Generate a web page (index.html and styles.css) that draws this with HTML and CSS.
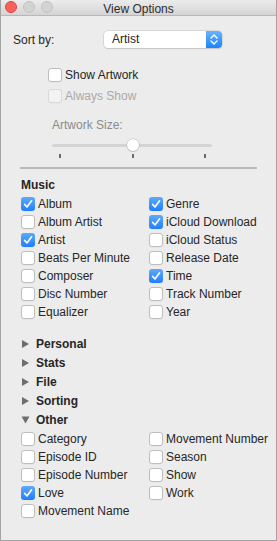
FILE: index.html
```html
<!DOCTYPE html>
<html>
<head>
<meta charset="utf-8">
<title>View Options</title>
<link rel="stylesheet" href="styles.css">
</head>
<body>
<div class="window">
  <div class="titlebar">
    <div class="lights">
      <span class="light red"></span>
      <span class="light off"></span>
      <span class="light off"></span>
    </div>
    <div class="title">View Options</div>
  </div>

  <div class="content">
    <div class="sort-row">
      <span class="sort-label">Sort by:</span>
      <div class="popup">
        <span class="popup-value">Artist</span>
        <span class="stepper">
          <svg width="16" height="17" viewBox="0 0 16 17"><path d="M5 7 L8 4 L11 7 M5 10 L8 13 L11 10" fill="none" stroke="#fff" stroke-width="1.4" stroke-linecap="round" stroke-linejoin="round"/></svg>
        </span>
      </div>
    </div>

    <div class="artwork">
      <label class="check-row"><span class="box"></span><span>Show Artwork</span></label>
      <label class="check-row disabled"><span class="box"></span><span>Always Show</span></label>
      <div class="size-label">Artwork Size:</div>
      <div class="slider">
        <div class="track"></div>
        <div class="knob"></div>
      </div>
      <div class="ticks"><span></span><span></span><span></span></div>
    </div>

    <div class="sep"></div>

    <div class="group">
      <div class="heading">Music</div>
      <div class="grid">
        <label class="item"><span class="box on"><svg width="14" height="14" viewBox="0 0 14 14"><path d="M3.6 7.4 L6 9.9 L10.6 3.8" fill="none" stroke="#fff" stroke-width="1.6" stroke-linecap="round" stroke-linejoin="round"/></svg></span><span>Album</span></label>
        <label class="item"><span class="box on"><svg width="14" height="14" viewBox="0 0 14 14"><path d="M3.6 7.4 L6 9.9 L10.6 3.8" fill="none" stroke="#fff" stroke-width="1.6" stroke-linecap="round" stroke-linejoin="round"/></svg></span><span>Genre</span></label>
        <label class="item"><span class="box"></span><span>Album Artist</span></label>
        <label class="item"><span class="box on"><svg width="14" height="14" viewBox="0 0 14 14"><path d="M3.6 7.4 L6 9.9 L10.6 3.8" fill="none" stroke="#fff" stroke-width="1.6" stroke-linecap="round" stroke-linejoin="round"/></svg></span><span>iCloud Download</span></label>
        <label class="item"><span class="box on"><svg width="14" height="14" viewBox="0 0 14 14"><path d="M3.6 7.4 L6 9.9 L10.6 3.8" fill="none" stroke="#fff" stroke-width="1.6" stroke-linecap="round" stroke-linejoin="round"/></svg></span><span>Artist</span></label>
        <label class="item"><span class="box"></span><span>iCloud Status</span></label>
        <label class="item"><span class="box"></span><span>Beats Per Minute</span></label>
        <label class="item"><span class="box"></span><span>Release Date</span></label>
        <label class="item"><span class="box"></span><span>Composer</span></label>
        <label class="item"><span class="box on"><svg width="14" height="14" viewBox="0 0 14 14"><path d="M3.6 7.4 L6 9.9 L10.6 3.8" fill="none" stroke="#fff" stroke-width="1.6" stroke-linecap="round" stroke-linejoin="round"/></svg></span><span>Time</span></label>
        <label class="item"><span class="box"></span><span>Disc Number</span></label>
        <label class="item"><span class="box"></span><span>Track Number</span></label>
        <label class="item"><span class="box"></span><span>Equalizer</span></label>
        <label class="item"><span class="box"></span><span>Year</span></label>
      </div>
    </div>

    <ul class="disclosures">
      <li class="disc"><svg class="tri" width="9" height="10" viewBox="0 0 9 10"><path d="M1 1 L8 5 L1 9 Z" fill="#6e6e6e"/></svg><span>Personal</span></li>
      <li class="disc"><svg class="tri" width="9" height="10" viewBox="0 0 9 10"><path d="M1 1 L8 5 L1 9 Z" fill="#6e6e6e"/></svg><span>Stats</span></li>
      <li class="disc"><svg class="tri" width="9" height="10" viewBox="0 0 9 10"><path d="M1 1 L8 5 L1 9 Z" fill="#6e6e6e"/></svg><span>File</span></li>
      <li class="disc"><svg class="tri" width="9" height="10" viewBox="0 0 9 10"><path d="M1 1 L8 5 L1 9 Z" fill="#6e6e6e"/></svg><span>Sorting</span></li>
      <li class="disc"><svg class="tri" width="9" height="10" viewBox="0 0 9 10"><path d="M0.5 1.5 L8.5 1.5 L4.5 8.5 Z" fill="#6e6e6e"/></svg><span>Other</span></li>
    </ul>

    <div class="grid other">
      <label class="item"><span class="box"></span><span>Category</span></label>
      <label class="item"><span class="box"></span><span>Movement Number</span></label>
      <label class="item"><span class="box"></span><span>Episode ID</span></label>
      <label class="item"><span class="box"></span><span>Season</span></label>
      <label class="item"><span class="box"></span><span>Episode Number</span></label>
      <label class="item"><span class="box"></span><span>Show</span></label>
      <label class="item"><span class="box on"><svg width="14" height="14" viewBox="0 0 14 14"><path d="M3.6 7.4 L6 9.9 L10.6 3.8" fill="none" stroke="#fff" stroke-width="1.6" stroke-linecap="round" stroke-linejoin="round"/></svg></span><span>Love</span></label>
      <label class="item"><span class="box"></span><span>Work</span></label>
      <label class="item"><span class="box"></span><span>Movement Name</span></label>
    </div>
  </div>
</div>
</body>
</html>
```

FILE: styles.css
```css
* { box-sizing: border-box; }

html, body {
  margin: 0;
  padding: 0;
  background: #ececec;
}

body {
  font-family: "Liberation Sans", Arial, sans-serif;
  font-size: 12px;
  color: #262626;
}

.window {
  width: 277px;
  height: 541px;
  background: #ececec;
  border: 1px solid #a3a3a3;
  border-top: none;
  overflow: hidden;
}

.titlebar {
  position: relative;
  height: 16px;
  background: linear-gradient(#ebebeb, #d5d5d5);
  border-bottom: 1px solid #b7b7b7;
}

.title {
  text-align: center;
  line-height: 18px;
  font-size: 12px;
  color: #2b2b2b;
}

.lights {
  position: absolute;
  left: 4px;
  top: 1px;
  display: flex;
  gap: 6px;
}

.light {
  width: 12px;
  height: 12px;
  border-radius: 50%;
}

.light.red {
  background: #fc605b;
  border: 1px solid #e0443e;
}

.light.off {
  background: #d3d3d3;
  border: 1px solid #c2c2c2;
}

.content {
  padding-left: 20px;
}

.sort-row {
  display: flex;
  align-items: center;
  margin-top: 15px;
  margin-left: -8px;
  height: 17px;
}

.sort-label {
  width: 91px;
}

.popup {
  display: flex;
  width: 118px;
  height: 17px;
  background: #fff;
  border-radius: 4px;
  box-shadow: 0 0 0 0.5px #c3c3c3, 0 1px 1px rgba(0,0,0,0.15);
  overflow: hidden;
}

.popup-value {
  flex: 1;
  padding-left: 8px;
  line-height: 17px;
}

.stepper {
  width: 16px;
  height: 17px;
  background: linear-gradient(#6cb3fa, #1a84fb);
  display: flex;
}

.artwork {
  padding-left: 27px;
  margin-top: 20px;
}

.check-row {
  display: flex;
  align-items: center;
  gap: 3px;
  height: 14px;
  margin-bottom: 7px;
}

.check-row.disabled {
  color: #a9a9a9;
}

.check-row.disabled .box {
  background: #f3f3f3;
  border-color: #d9d9d9;
}

.box {
  width: 14px;
  height: 14px;
  flex: none;
  background: #fff;
  border: 1px solid #bdbdbd;
  border-radius: 3px;
  display: flex;
  box-shadow: 0 0.5px 0 rgba(0,0,0,0.05);
}

.box.on {
  border: none;
  background: linear-gradient(#5fa9fb, #217ff8);
}

.size-label {
  margin-top: 15px;
  margin-left: 4px;
  height: 14px;
  line-height: 14px;
  color: #8b8b8b;
}

.slider {
  position: relative;
  margin-top: 7px;
  margin-left: 4px;
  width: 160px;
  height: 12px;
  display: flex;
  align-items: center;
}

.track {
  width: 100%;
  height: 3px;
  border-radius: 2px;
  background: #d4d4d4;
}

.knob {
  position: absolute;
  left: 75px;
  top: 0;
  width: 12px;
  height: 12px;
  border-radius: 50%;
  background: #fff;
  box-shadow: 0 0 0 0.5px #b9b9b9, 0 1px 1px rgba(0,0,0,0.2);
}

.ticks {
  display: flex;
  justify-content: space-between;
  width: 160px;
  margin-left: 4px;
  padding: 0 6px 0 7px;
  margin-top: 3px;
  height: 4px;
}

.ticks span {
  width: 2px;
  height: 4px;
  background: #6c6c6c;
}

.sep {
  margin: 9px 0 0 -1px;
  width: 237px;
  height: 2px;
  background: #b9b9b9;
}

.heading {
  margin-top: 9px;
  height: 14px;
  line-height: 14px;
  font-weight: bold;
}

.grid {
  display: grid;
  grid-template-columns: 128px 1fr;
  grid-auto-rows: 18px;
}

.group .grid {
  margin-top: 3px;
}

.grid.other {
  margin-top: 1px;
}

.item {
  display: flex;
  align-items: center;
  gap: 3px;
  white-space: nowrap;
}

.disclosures {
  list-style: none;
  margin: 13px 0 0 0;
  padding: 0;
}

.disc {
  display: flex;
  align-items: center;
  height: 19px;
  gap: 6px;
  font-weight: bold;
}

.tri {
  flex: none;
}
```
